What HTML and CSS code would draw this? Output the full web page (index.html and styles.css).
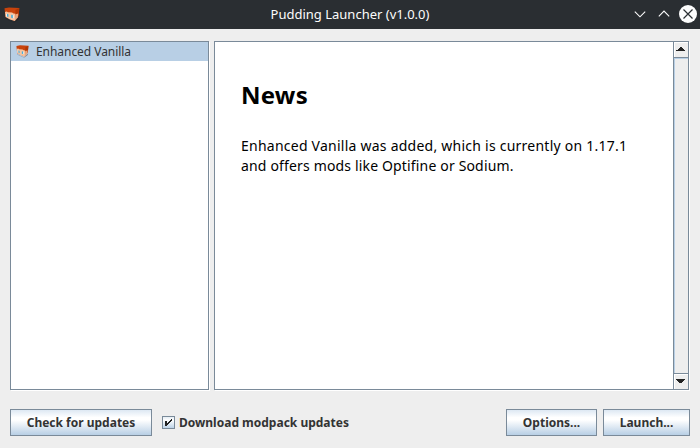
FILE: index.html
```html
<!DOCTYPE html>
<html lang="en">
<head>
<meta charset="utf-8">
<title>Pudding Launcher (v1.0.0)</title>
<link rel="stylesheet" href="styles.css">
</head>
<body>
<svg class="defs" width="0" height="0" aria-hidden="true">
  <symbol id="head" viewBox="0 0 16 16">
    <path fill="#1d1713" opacity=".45" d="M1 11 10 15.4 15 10 14.4 12.4 10 15.8 2 12z"/>
    <path fill="#c8430c" d="M.5 1.2 5 .4 15.3 1 14.6 9 10.4 14 1.5 10z"/>
    <path fill="#b03604" d="M11.4 3 15.3 1 14.6 8 11.6 9z"/>
    <path fill="#f6c4a0" d="M1 5 2.6 4.4 4 5.2 8 5.4 9.6 6.4 11.4 6.8 11 14 6 12.6 1.6 10z"/>
    <path fill="#e9a880" d="M11.3 7.6 14.2 6.6 13.8 10.6 10.8 14z"/>
    <path fill="#f3efec" d="M2 6.8 3 7V9.8L2 9.4zM8.6 8 9.8 8.2V11.2L8.6 11z"/>
    <path fill="#45aeda" d="M3 6.8 4.4 7.2V10L3 9.6zM7.2 7.8 8.8 8.1V11.2L7.2 10.8z"/>
  </symbol>
</svg>
<div class="window">
  <header class="titlebar">
    <svg class="app-icon"><use href="#head"/></svg>
    <h1 class="title">Pudding Launcher (v1.0.0)</h1>
    <svg class="controls" width="68" height="29" viewBox="0 0 68 29">
      <g fill="none" stroke="#fcfcfc" stroke-width="1.1">
        <path d="M2.8 11.6 8 16.8 13.2 11.6"/>
        <path d="M26.8 16.3 32 11.1 37.2 16.3"/>
      </g>
      <circle cx="56" cy="14" r="9" fill="#fcfcfc"/>
      <path d="M51.5 9.5 60.5 18.5M60.5 9.5 51.5 18.5" stroke="#2a2e32" stroke-width="1.2"/>
    </svg>
  </header>
  <main class="panes">
    <div class="pane list">
      <div class="item"><svg class="item-icon"><use href="#head"/></svg><span class="item-label">Enhanced Vanilla</span></div>
    </div>
    <div class="pane viewer">
      <article class="news">
        <h2>News</h2>
        <p><span class="wide">Enhanced Vanilla was added, which is currently on 1.17.1</span><br>and offers mods like Optifine or Sodium.</p>
      </article>
      <div class="scrollbar">
        <div class="arrow up"><svg width="14" height="15" shape-rendering="crispEdges"><path fill="#222" d="M6 5h2v1h1v1h1v1h1v1H2V8h2V7h1V6h1z"/></svg></div>
        <div class="track"></div>
        <div class="arrow down"><svg width="14" height="15" shape-rendering="crispEdges"><path fill="#222" d="M2 5h9v1h-1v1H9v1H8v1H5V8H4V7H3V6H2z"/></svg></div>
      </div>
    </div>
  </main>
  <footer class="actions">
    <button class="button check"><span>Check for updates</span></button>
    <label class="option">
      <svg width="13" height="13" viewBox="0 0 13 13" shape-rendering="crispEdges">
        <defs><linearGradient id="metal" x2="0" y2="1"><stop stop-color="#e1eaf2"/><stop offset=".3" stop-color="#fff"/><stop offset="1" stop-color="#b8cfe5"/></linearGradient></defs>
        <rect x=".5" y=".5" width="12" height="12" fill="url(#metal)" stroke="#7a8a99"/>
        <path fill="#222" d="M3 5h2v2h1V6h1V5h1V4h1V3h1v2H9v1H8v1H7v1H6v1H5v1H3z"/>
      </svg>
      <span>Download modpack updates</span>
    </label>
    <button class="button options"><span>Options...</span></button>
    <button class="button launch"><span>Launch...</span></button>
  </footer>
</div>
</body>
</html>
```

FILE: styles.css
```css
* { box-sizing: border-box; }
body {
  margin: 0;
  background: #eee;
  color: #333;
  font-family: "Noto Sans", sans-serif;
  font-size: 12px;
}
.defs { display: block; }
.window { display: flex; flex-direction: column; height: 448px; }
.titlebar {
  display: grid;
  grid-template-columns: 68px 1fr 68px;
  align-items: center;
  height: 29px;
  background: #2a2e32;
  color: #fcfcfc;
}
.app-icon { width: 16px; height: 16px; margin-left: 4px; }
.title { margin: 0; text-align: center; font-size: 13px; line-height: 29px; font-weight: 400; }
.controls { display: block; }
.panes { display: flex; gap: 5px; height: 349px; margin: 12px 11px 0 10px; }
.pane { background: #fff; border: 1px solid #7a8a99; box-shadow: 1px 1px 0 #fff; }
.list { width: 199px; }
.item { display: flex; align-items: center; height: 19px; padding-left: 5px; background: #b8cfe5; }
.item-icon { width: 13px; height: 13px; margin-right: 7px; }
.item-label { line-height: 19px; letter-spacing: -.05px; }
.viewer { display: flex; width: 475px; }
.news { flex: 1; padding: 36px 0 0 26px; color: #000; }
.news h2 { margin: 0; font-size: 24px; line-height: 34px; font-weight: 700; letter-spacing: .25px; }
.news p { margin: 24px 0 0; font-size: 14px; line-height: 20px; letter-spacing: .16px; white-space: nowrap; }
.wide { letter-spacing: .24px; }
.scrollbar { display: flex; flex-direction: column; width: 15px; border-left: 1px solid #7a8a99; }
.arrow { height: 15px; background: #eee; box-shadow: inset 1px 1px 0 #fff; }
.arrow svg { display: block; }
.track {
  flex: 1;
  background: #eee;
  border: solid #7a8a99;
  border-width: 1px 0;
  box-shadow: inset 1px 1px 0 #b8cfe5;
}
.actions { display: flex; align-items: center; height: 27px; margin: 19px 10px 0; }
.button {
  height: 27px;
  padding: 0;
  border: 1px solid #7a8a99;
  background: linear-gradient(#dde8f3, #fff 30%, #fff 40%, #b8cfe5);
  color: #333;
  font: 700 12px/25px "Noto Sans", sans-serif;
}
.check { width: 142px; }
.option { display: flex; align-items: center; gap: 4px; margin: 0 auto 0 10px; font-weight: 700; }
.options { width: 91px; margin-right: 6px; }
.launch { width: 87px; }
```
